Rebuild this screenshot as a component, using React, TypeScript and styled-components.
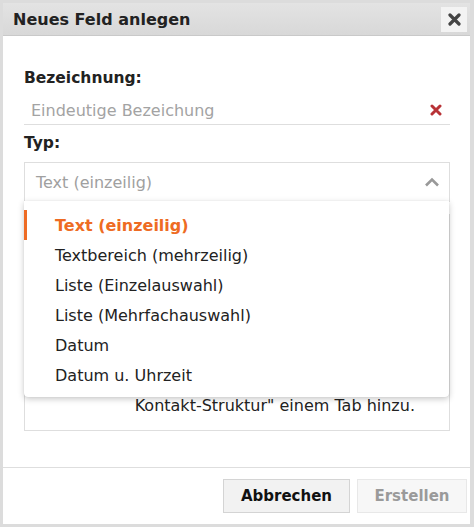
import React from 'react';
import styled, { createGlobalStyle } from 'styled-components';

const GlobalStyle = createGlobalStyle`
  html, body {
    margin: 0;
    padding: 0;
    background: #fff;
  }
  body {
    font-family: "DejaVu Sans", Verdana, sans-serif;
    color: #222;
  }
`;

const Dialog = styled.div`
  width: 474px;
  height: 527px;
  box-sizing: border-box;
  border-style: solid;
  border-color: #dcdcdc;
  border-width: 3px 4px 3px 3px;
  background: #fff;
  display: flex;
  flex-direction: column;
`;

const TitleBar = styled.div`
  height: 33px;
  box-sizing: border-box;
  display: flex;
  align-items: center;
  justify-content: space-between;
  padding: 0 3px 0 10px;
  background: linear-gradient(#e3e3e3, #d8d8d8);
  border-bottom: 1px solid #c9c9c9;
`;

const Title = styled.h1`
  margin: 0;
  font-size: 16px;
  font-weight: bold;
  color: #222;
`;

const CloseButton = styled.button`
  width: 26px;
  height: 25px;
  padding: 0;
  border: none;
  background: #f3f3f3;
  display: flex;
  align-items: center;
  justify-content: center;
`;

const Body = styled.div`
  flex: 1;
  padding: 33px 20px 0 21px;
  display: flex;
  flex-direction: column;
`;

const Label = styled.label<{ $gap?: number }>`
  font-size: 15.5px;
  font-weight: bold;
  line-height: 18px;
  color: #222;
  margin-top: ${(p) => p.$gap ?? 0}px;
`;

const InputRow = styled.div`
  margin-top: 9px;
  height: 29px;
  box-sizing: border-box;
  border-bottom: 1px solid #dedede;
  display: flex;
  align-items: center;
  padding: 0 8px 0 7px;
`;

const Placeholder = styled.span`
  flex: 1;
  font-size: 16px;
  color: #a3a3a3;
`;

const SelectWrap = styled.div`
  position: relative;
  margin-top: 10px;
`;

const SelectBox = styled.div`
  height: 40px;
  box-sizing: border-box;
  border: 1px solid #dedede;
  display: flex;
  align-items: center;
  padding: 0 9px 0 11px;
  font-size: 16px;
  color: #a0a0a0;
`;

const SelectText = styled.span`
  flex: 1;
`;

const Menu = styled.ul`
  position: absolute;
  top: 39px;
  left: 0;
  right: 1px;
  margin: 0;
  padding: 9px 0 7px;
  list-style: none;
  background: #fff;
  border-radius: 0 0 4px 4px;
  box-shadow: 0 2px 6px rgba(0, 0, 0, 0.22), 0 0 1px rgba(0, 0, 0, 0.15);
  z-index: 2;
`;

const Item = styled.li<{ $active?: boolean }>`
  height: 30px;
  display: flex;
  align-items: center;
  padding-left: 28px;
  font-size: 16px;
  color: ${(p) => (p.$active ? '#ee6b23' : '#222')};
  font-weight: ${(p) => (p.$active ? 'bold' : 'normal')};
  border-left: 3px solid ${(p) => (p.$active ? '#ee6b23' : 'transparent')};
`;

const HintBox = styled.div`
  margin-top: 12px;
  height: 217px;
  box-sizing: border-box;
  border: 1px solid #dedede;
  display: flex;
  align-items: flex-end;
  justify-content: flex-end;
  padding: 0 34px 14px 0;
  font-size: 16px;
  line-height: 20px;
  color: #222;
`;

const Footer = styled.div`
  border-top: 1px solid #dedede;
  padding: 11px 3px 11px 0;
  display: flex;
  justify-content: flex-end;
  gap: 7px;
`;

const Button = styled.button<{ $disabled?: boolean }>`
  height: 34px;
  box-sizing: border-box;
  padding: 0;
  width: ${(p) => (p.$disabled ? '110px' : '127px')};
  font-family: inherit;
  font-size: 15px;
  font-weight: bold;
  color: ${(p) => (p.$disabled ? '#9a9a9a' : '#111')};
  background: ${(p) => (p.$disabled ? '#f7f7f7' : '#f2f2f2')};
  border: 1px solid ${(p) => (p.$disabled ? '#e8e8e8' : '#d4d4d4')};
`;

const types = [
  'Text (einzeilig)',
  'Textbereich (mehrzeilig)',
  'Liste (Einzelauswahl)',
  'Liste (Mehrfachauswahl)',
  'Datum',
  'Datum u. Uhrzeit',
];

export default function App() {
  return (
    <>
      <GlobalStyle />
      <Dialog>
        <TitleBar>
          <Title>Neues Feld anlegen</Title>
          <CloseButton aria-label="Schließen">
            <svg width="13" height="13" viewBox="0 0 13 13">
              <path d="M2 2 L11 11 M11 2 L2 11" stroke="#444" strokeWidth="3.2" strokeLinecap="round" />
            </svg>
          </CloseButton>
        </TitleBar>
        <Body>
          <Label>Bezeichnung:</Label>
          <InputRow>
            <Placeholder>Eindeutige Bezeichung</Placeholder>
            <svg width="12" height="12" viewBox="0 0 12 12">
              <path d="M2 2 L10 10 M10 2 L2 10" stroke="#b83236" strokeWidth="3" strokeLinecap="round" />
            </svg>
          </InputRow>
          <Label $gap={9}>Typ:</Label>
          <SelectWrap>
            <SelectBox>
              <SelectText>Text (einzeilig)</SelectText>
              <svg width="16" height="10" viewBox="0 0 16 10">
                <path d="M2 8.5 L8 2.5 L14 8.5" fill="none" stroke="#999" strokeWidth="2.6" />
              </svg>
            </SelectBox>
            <Menu>
              {types.map((t, i) => (
                <Item key={t} $active={i === 0}>{t}</Item>
              ))}
            </Menu>
          </SelectWrap>
          <HintBox>Kontakt-Struktur" einem Tab hinzu.</HintBox>
        </Body>
        <Footer>
          <Button>Abbrechen</Button>
          <Button $disabled>Erstellen</Button>
        </Footer>
      </Dialog>
    </>
  );
}
